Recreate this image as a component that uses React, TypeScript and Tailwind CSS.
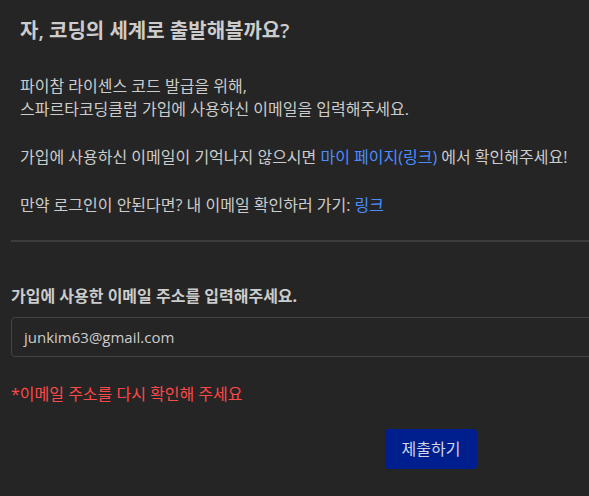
export default function App() {
  return (
    <div
      className="h-[496px] w-full overflow-hidden bg-[#252525] text-[#cccccc]"
      style={{ fontFamily: '"Open Sans", "Noto Sans CJK KR", sans-serif' }}
    >
      <div className="w-[851px] pl-[11px]">
        <section className="px-[9px] pt-[17px] pb-[23px]">
          <h1 className="text-[20px] font-semibold leading-[28px]">자, 코딩의 세계로 출발해볼까요?</h1>
          <div className="mt-[30px] space-y-[25px] text-[16px] leading-[23px]">
            <p>
              파이참 라이센스 코드 발급을 위해,
              <br />
              스파르타코딩클럽 가입에 사용하신 이메일을 입력해주세요.
            </p>
            <p>
              가입에 사용하신 이메일이 기억나지 않으시면{' '}
              <a className="text-[#4b8dff]">마이 페이지(링크)</a> 에서 확인해주세요!
            </p>
            <p>
              만약 로그인이 안된다면? 내 이메일 확인하러 가기: <a className="text-[#4b8dff]">링크</a>
            </p>
          </div>
        </section>
        <hr className="border-t-2 border-[#3c3c3c]" />
        <form className="pt-[44px]">
          <label className="block text-[16px] font-bold leading-[20px]">
            가입에 사용한 이메일 주소를 입력해주세요.
          </label>
          <div className="mt-[11px] flex h-[40px] items-center rounded-[4px] border border-[#444444] px-[12px] text-[15px]">
            junkim63@gmail.com
          </div>
          <p className="mt-[26px] text-[16px] leading-[22px] text-[#ff4848]">*이메일 주소를 다시 확인해 주세요</p>
          <div className="mt-[24px] flex justify-center">
            <button
              type="button"
              className="h-[40px] w-[92px] rounded-[4px] bg-[#001f8e] text-[16px] text-[#d4d4e4]"
            >
              제출하기
            </button>
          </div>
        </form>
      </div>
    </div>
  )
}
